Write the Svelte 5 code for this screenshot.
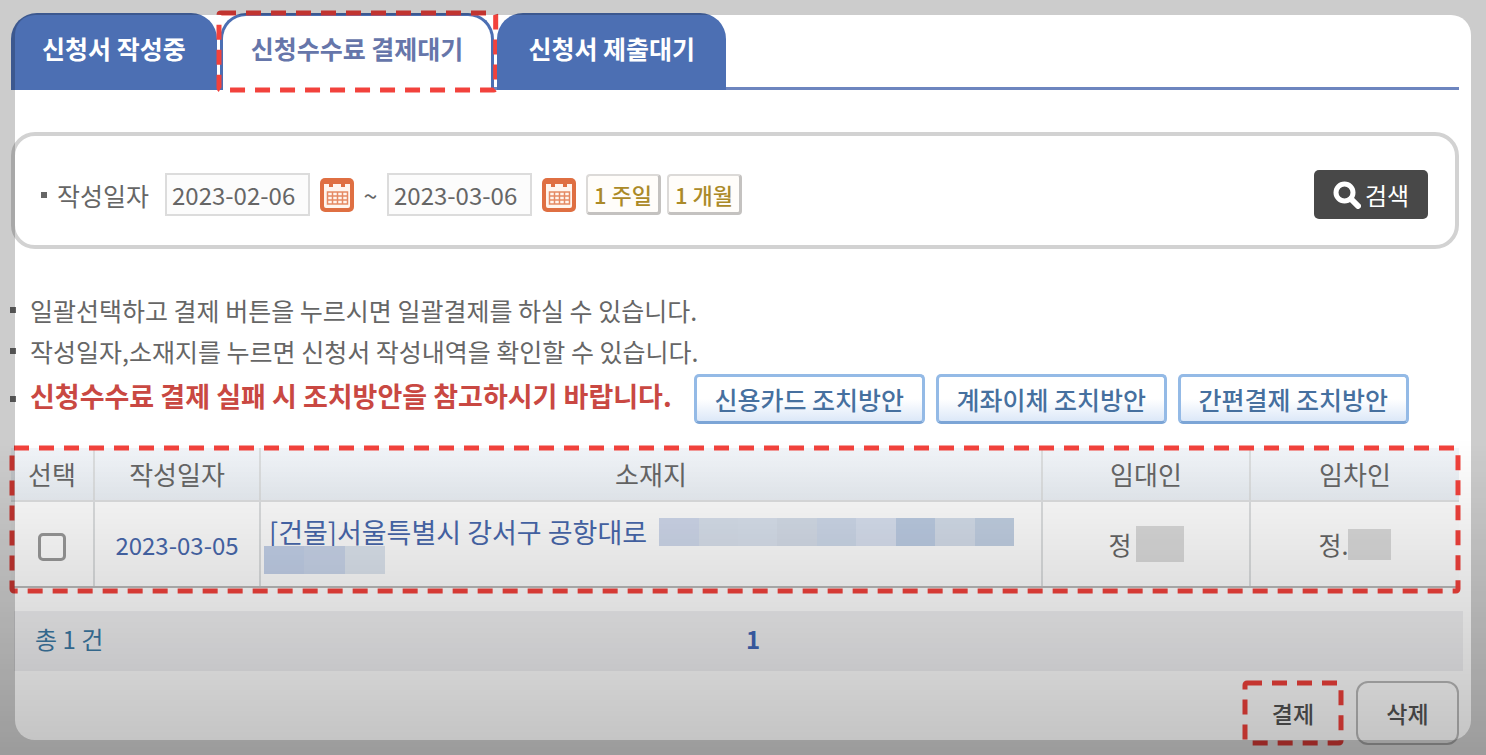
<script>
    let startDate = '2023-02-06';
    let endDate = '2023-03-06';
    let current = 1;

    const tabs = ['신청서 작성중', '신청수수료 결제대기', '신청서 제출대기'];
    const periods = ['1 주일', '1 개월'];
    const guides = ['신용카드 조치방안', '계좌이체 조치방안', '간편결제 조치방안'];

    // masked part of the address, one colour per block
    const maskLong = ['#ced7ea', '#d7dfeb', '#d8e0ec', '#d4dce8', '#cdd8e9', '#d7dfee', '#bbcbe2', '#d3dce9', '#c1cfe2'];
    const maskShort = ['#c2d0e8', '#c8d4e9', '#dce4ee'];

    let rows = [
        {checked: false, date: '2023-03-05', place: '[건물]서울특별시 강서구 공항대로', lessor: '정', lessee: '정.'}
    ];
</script>

{#snippet marker()}
    <svg class="marker" aria-hidden="true"><rect width="100%" height="100%" rx="2" /></svg>
{/snippet}

{#snippet calendar()}
    <svg width="34" height="34" viewBox="0 0 34 34" aria-hidden="true">
        <rect width="34" height="34" rx="5" fill="#df6f42" />
        <path d="M4 6h5v3h4V6h8v3h4V6h5v22a2 2 0 0 1-2 2H6a2 2 0 0 1-2-2z" fill="#fff5ee" />
        <path d="M7.500 14h20v12h-20zM7.500 18h20M7.500 22h20M12.500 14v12M17.500 14v12M22.500 14v12" fill="none" stroke="#e58a63" stroke-width="1.500" />
    </svg>
{/snippet}

<main>
    <nav class="tabs">
        {#each tabs as tab, i}
            <button class="tab" class:is-active={current === i} on:click={() => current = i}>
                {tab}
                {#if current === i}{@render marker()}{/if}
            </button>
        {/each}
    </nav>

    <form class="search" on:submit|preventDefault>
        <label class="dot" for="start">작성일자</label>
        <input id="start" class="date" type="text" bind:value={startDate}>
        <button type="button" class="calendar" aria-label="시작일">{@render calendar()}</button>
        <span class="tilde">~</span>
        <input class="date" type="text" aria-label="종료일" bind:value={endDate}>
        <button type="button" class="calendar" aria-label="종료일 달력">{@render calendar()}</button>
        <div class="periods">
            {#each periods as period}
                <button type="button" class="period">{period}</button>
            {/each}
        </div>
        <button class="submit">
            <svg width="28" height="28" viewBox="0 0 28 28" aria-hidden="true">
                <circle cx="11.500" cy="11.500" r="8.500" fill="none" stroke="#fff" stroke-width="5" />
                <path d="M18 18l7 7" stroke="#fff" stroke-width="6" stroke-linecap="round" />
            </svg>
            검색
        </button>
    </form>

    <ul class="notices">
        <li class="dot">일괄선택하고 결제 버튼을 누르시면 일괄결제를 하실 수 있습니다.</li>
        <li class="dot">작성일자,소재지를 누르면 신청서 작성내역을 확인할 수 있습니다.</li>
        <li class="dot">
            <strong>신청수수료 결제 실패 시 조치방안을 참고하시기 바랍니다.</strong>
            <div class="guides">
                {#each guides as guide}
                    <button class="guide">{guide}</button>
                {/each}
            </div>
        </li>
    </ul>

    <div class="list">
        <table>
            <colgroup>
                <col class="col-check"><col class="col-date"><col><col class="col-name"><col class="col-name">
            </colgroup>
            <thead>
                <tr><th>선택</th><th>작성일자</th><th>소재지</th><th>임대인</th><th>임차인</th></tr>
            </thead>
            <tbody>
                {#each rows as row}
                    <tr>
                        <td><input class="check" type="checkbox" aria-label="선택" bind:checked={row.checked}></td>
                        <td><a class="day" href="#detail">{row.date}</a></td>
                        <td class="place">
                            <a href="#detail">{row.place}</a><span class="mask long">{#each maskLong as color}<i style="background: {color}"></i>{/each}</span>
                            <span class="mask short">{#each maskShort as color}<i style="background: {color}"></i>{/each}</span>
                        </td>
                        <td><span class="name">{row.lessor}<span class="mask person"></span></span></td>
                        <td><span class="name">{row.lessee}<span class="mask person small"></span></span></td>
                    </tr>
                {/each}
            </tbody>
        </table>
        {@render marker()}
    </div>

    <div class="paging">
        <span>총 {rows.length} 건</span>
        <div class="pages"><a href="#page1">1</a></div>
    </div>

    <div class="actions">
        <button class="pay">결제{@render marker()}</button>
        <button>삭제</button>
    </div>
</main>

<div class="shade"></div>
<div class="frame"></div>

<style>
    :global(body) {
        background: #fff;
    }
    main, button, input {
        font-family: "Noto Sans CJK KR", sans-serif;
        font-size: 25px;
        color: #666;
    }
    main {
        padding: 13px 27px 10px 11px;
        line-height: 36px;
    }
    button {
        box-sizing: border-box;
        padding: 0;
        white-space: nowrap;
        cursor: pointer;
    }
    a {
        color: #4868ac;
        text-decoration: none;
    }

    /* red dashed outline */
    .marker {
        position: absolute;
        top: 0;
        left: 0;
        width: 100%;
        height: 100%;
        overflow: visible;
        pointer-events: none;
    }
    .marker rect {
        fill: none;
        stroke: #f2423c;
        stroke-width: 5;
        stroke-dasharray: 15 10;
    }

    .tabs {
        display: flex;
        gap: 3px;
        border-bottom: 3px solid #6d85bf;
    }
    .tab {
        position: relative;
        height: 77px;
        margin-bottom: -3px;
        padding: 0 31px 8px;
        border: 0;
        border-radius: 26px 26px 0 0;
        background: #4c6fb3;
        color: #fff;
        font-weight: bold;
    }
    .tab.is-active {
        border: 3px solid #4c6fb3;
        border-bottom: 0;
        padding: 0 28px 11px;
        background: #fff;
        color: #6676aa;
    }
    .tab .marker {
        top: -3px;
        left: -4px;
        width: calc(100% + 8px);
        height: calc(100% + 3px);
    }

    .dot {
        display: flex;
        align-items: center;
    }
    .dot::before {
        content: '';
        width: 6px;
        height: 6px;
        margin-right: 10px;
        background: #666;
    }

    .search {
        display: flex;
        align-items: center;
        box-sizing: border-box;
        height: 117px;
        margin-top: 42px;
        padding: 8px 27px 0 26px;
        border: 4px solid #d2d2d2;
        border-radius: 24px;
    }
    .search .dot {
        margin-right: 16px;
    }
    .date {
        box-sizing: border-box;
        width: 145px;
        height: 43px;
        padding: 0 5px;
        border: 2px solid #dcdcdc;
        background: #fcfcfc;
        font-size: 24px;
    }
    .calendar {
        display: flex;
        margin-left: 10px;
        border: 0;
        background: none;
    }
    .tilde {
        width: 33px;
        text-align: center;
    }
    .periods {
        display: flex;
        gap: 6px;
        margin: 0 auto 0 10px;
    }
    .period {
        width: 75px;
        height: 41px;
        border: 2px solid #dcdad8;
        border-right: 3px solid #c4c2c0;
        border-bottom: 3px solid #c4c2c0;
        border-radius: 4px;
        background: #fffdfa;
        color: #ab8a28;
        font-size: 22px;
        font-weight: 500;
        line-height: 34px;
    }
    .submit {
        display: flex;
        align-items: center;
        justify-content: center;
        gap: 4px;
        width: 114px;
        height: 49px;
        border: 0;
        border-radius: 5px;
        background: #484848;
        color: #fff;
        font-size: 24px;
    }

    .notices {
        margin: 40px 0 0;
        padding: 0;
        list-style: none;
    }
    .notices li {
        min-height: 41px;
    }
    .notices .dot::before {
        margin-left: -1px;
        margin-right: 14px;
    }
    .notices li:last-child {
        min-height: 56px;
    }
    strong {
        padding-bottom: 6px;
        color: #c94842;
        font-size: 27px;
    }
    .guides {
        display: flex;
        gap: 11px;
        margin-left: 22px;
    }
    .guide {
        width: 231px;
        height: 50px;
        border: 3px solid #94bae6;
        border-bottom-color: #7ca5d6;
        border-radius: 5px;
        background: linear-gradient(#fff 50%, #dce8f8);
        color: #46709f;
        font-weight: 500;
    }

    .list {
        position: relative;
        margin-top: 21px;
    }
    .list .marker {
        left: 1px;
        width: calc(100% - 2px);
        height: calc(100% + 3px);
    }
    table {
        width: 100%;
        table-layout: fixed;
        border-collapse: separate;
        border-spacing: 0;
        border-bottom: 2px solid #bbb;
    }
    .col-check {
        width: 84px;
    }
    .col-date {
        width: 166px;
    }
    .col-name {
        width: 208px;
    }
    th, td {
        box-sizing: border-box;
        padding: 0;
        border-right: 2px solid #dcdedf;
        text-align: center;
    }
    th:last-child, td:last-child {
        border-right: 0;
    }
    th {
        height: 54px;
        border-bottom: 2px solid #dedfe0;
        background: linear-gradient(#f2f5f9, #e9eef3);
        font-size: 26px;
        font-weight: normal;
    }
    td {
        height: 84px;
        background: #fdfdfd;
    }
    .check {
        appearance: none;
        display: block;
        width: 28px;
        height: 28px;
        margin: 5px auto 0;
        border: 3px solid #999;
        border-radius: 5px;
        background: #fff;
    }
    .check:checked {
        background: #4868ac;
    }
    .day {
        font-size: 24px;
    }
    .place {
        padding: 4px 0 0 3px;
        text-align: left;
        font-size: 27px;
        line-height: 28px;
    }
    .place a {
        margin: 0 12px 0 5px;
    }
    .mask {
        display: inline-flex;
        vertical-align: bottom;
        height: 28px;
    }
    .mask i {
        flex: 1;
    }
    .long {
        width: 355px;
    }
    .short {
        display: flex;
        width: 121px;
    }
    .name {
        display: flex;
        align-items: center;
        justify-content: center;
        gap: 4px;
    }
    .person {
        width: 48px;
        height: 36px;
        background: #dadada;
    }
    .person.small {
        width: 43px;
        height: 31px;
        margin-left: -4px;
    }

    .paging {
        display: flex;
        align-items: center;
        height: 56px;
        margin: 23px -4px 0 3px;
        padding: 0 0 4px 21px;
        background: #f1f1f3;
        color: #3d7aa5;
        font-size: 24px;
    }
    .pages {
        flex: 1;
        padding-right: 60px;
        text-align: center;
    }
    .pages a {
        color: #3f66b8;
        font-weight: bold;
    }

    .actions {
        display: flex;
        justify-content: flex-end;
        gap: 13px;
        margin-top: 10px;
    }
    .actions button {
        position: relative;
        width: 103px;
        height: 64px;
        border: 2px solid #bbb;
        border-radius: 12px;
        background: transparent;
        color: #555;
        font-size: 23px;
        font-weight: 500;
    }
    .actions .pay {
        width: 100px;
        border-color: transparent;
    }

    .shade, .frame {
        position: fixed;
        pointer-events: none;
    }
    .shade {
        top: 58%;
        right: 0;
        bottom: 0;
        left: 0;
        background: linear-gradient(transparent, rgba(0, 0, 0, 0.24));
    }
    .frame {
        top: 15px;
        right: 15px;
        bottom: 15px;
        left: 15px;
        border-radius: 20px;
        box-shadow: 0 0 0 40px rgba(0, 0, 0, 0.2);
    }
</style>
